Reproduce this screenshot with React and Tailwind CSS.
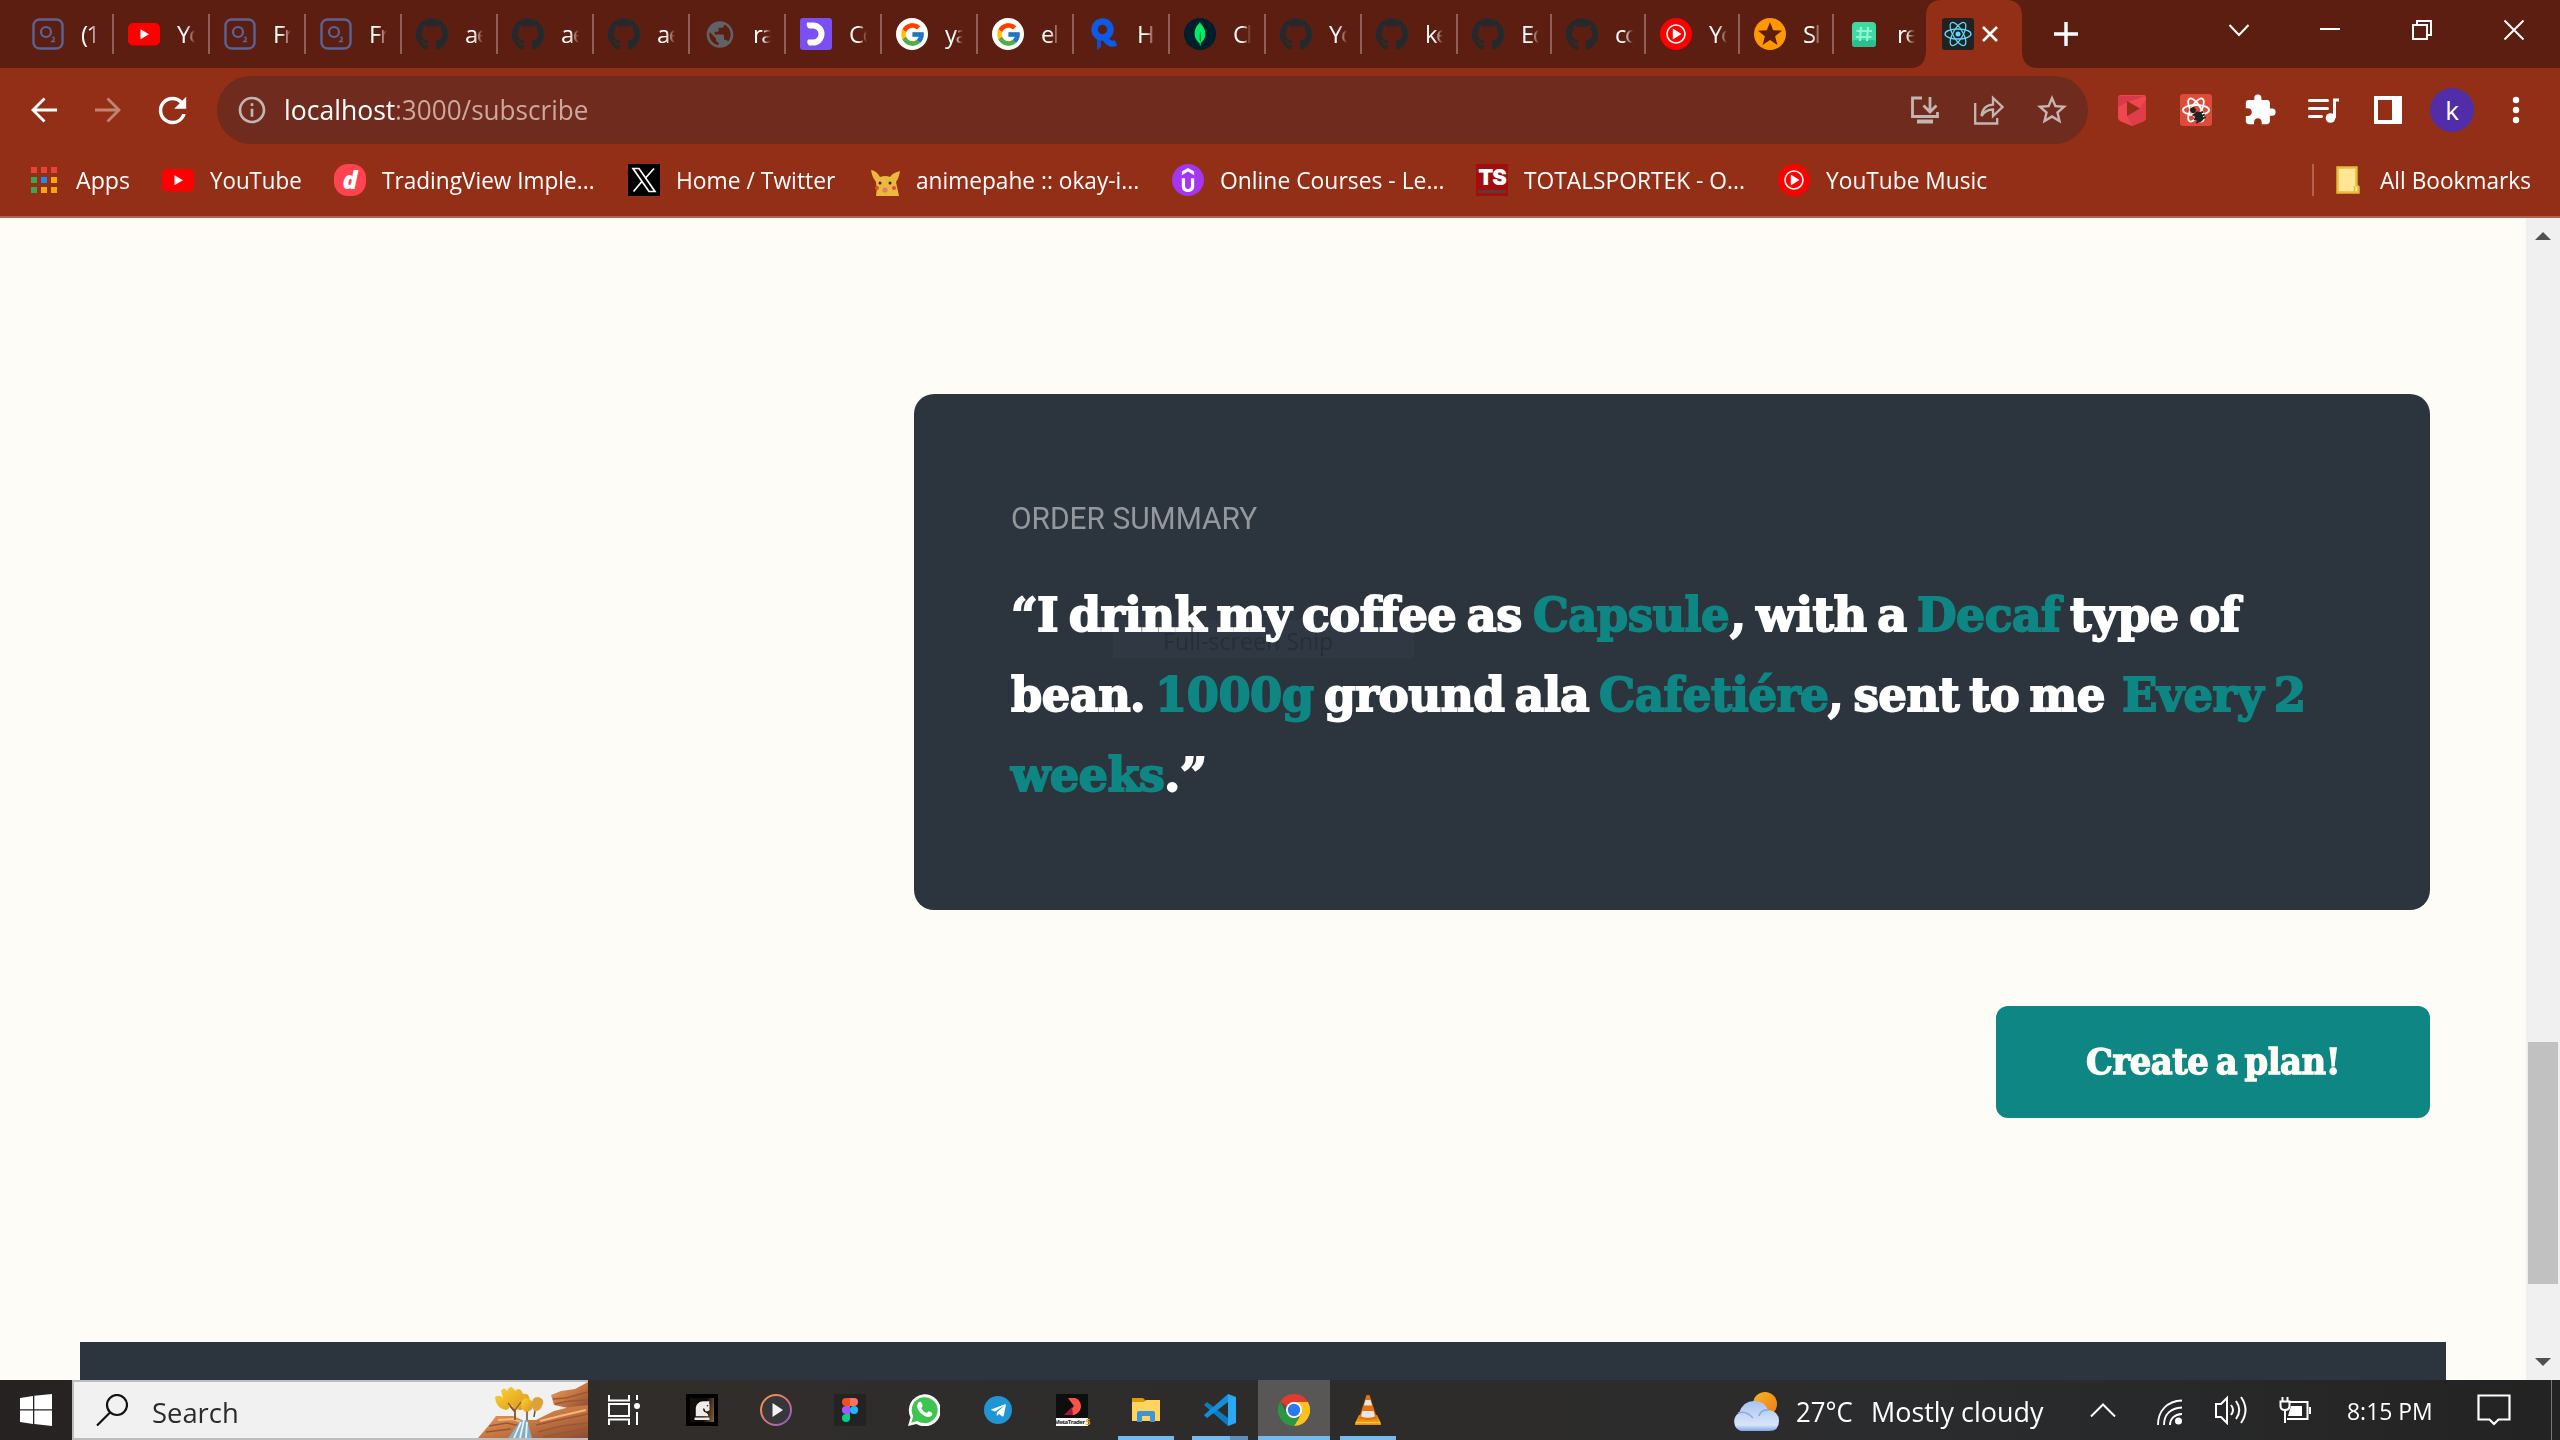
import { useLayoutEffect, useRef } from "react";
import { FaGithub, FaTelegramPlane, FaChessKnight } from "react-icons/fa";
import { FcGoogle } from "react-icons/fc";
import { SiMongodb, SiUdemy } from "react-icons/si";
import { MdRefresh, MdInfoOutline, MdStarOutline, MdExtension, MdPublic } from "react-icons/md";

/* Text set to an exact advance width, whatever face is available. */
function Fit({ w, children, className = "" }) {
  const inner = useRef(null);
  useLayoutEffect(() => {
    const natural = inner.current.offsetWidth;
    if (natural) inner.current.style.transform = `scaleX(${w / natural})`;
  }, [w]);
  return (
    <span className={`inline-block shrink-0 whitespace-pre ${className}`} style={{ width: w }}>
      <span ref={inner} className="inline-block origin-left">{children}</span>
    </span>
  );
}

/* ---------- Favicons ---------- */
const O2 = () => (
  <svg viewBox="0 0 32 32" className="size-8" fill="none" stroke="#5b6399">
    <rect x="1.5" y="1.5" width="29" height="29" rx="6" strokeWidth="2.4" />
    <circle cx="14" cy="14" r="5" strokeWidth="2.2" />
    <path d="M20 19.500c1.500-1 3 .3 2 1.600l-2.200 2.400h3.200" strokeWidth="1.400" />
  </svg>
);
const YouTube = () => (
  <svg viewBox="0 0 32 32" className="size-8">
    <rect y="5" width="32" height="22.500" rx="5" fill="#f00" />
    <path d="M12.500 11.200v10l8.500-5z" fill="#fff" />
  </svg>
);
const GitHub = () => <FaGithub className="size-[33px] text-[#24292e]" />;
const Globe = () => <MdPublic className="size-[33px] text-[#5f6368]" />;
const Dcoder = () => (
  <svg viewBox="0 0 32 32" className="size-8">
    <rect width="32" height="32" rx="3" fill="#7950f2" />
    <path d="M7 4.500h6a11.500 11.500 0 0 1 0 23h-4q-3-3-1-6h5a5.500 5.500 0 0 0 0-11h-4q-3-2-2-6z" fill="#fff" />
  </svg>
);
const Google = () => (
  <span className="flex size-8 items-center justify-center rounded-full bg-white">
    <FcGoogle className="size-[27px]" />
  </span>
);
const RMark = () => (
  <svg viewBox="0 0 32 32" className="size-8" fill="none">
    <path d="M9 18l4 2v9l-4 3z" fill="#0b4fd0" />
    <circle cx="14.500" cy="11.500" r="8" stroke="#0b5be6" strokeWidth="6.500" />
    <path d="M16 18c3 7 7 9 12 7" stroke="#0b5be6" strokeWidth="6" />
  </svg>
);
const Mongo = () => (
  <span className="flex size-8 items-center justify-center rounded-full bg-[#001e2b]">
    <SiMongodb className="size-[24px] text-[#00ed64]" />
  </span>
);
const YTMusic = () => (
  <svg viewBox="0 0 32 32" className="size-8">
    <circle cx="16" cy="16" r="16" fill="#f00" />
    <circle cx="16" cy="16" r="9" fill="none" stroke="#fff" strokeWidth="1.600" />
    <path d="M12.800 10.500v11l8.700-5.500z" fill="#fff" />
  </svg>
);
const StarIcon = () => (
  <svg viewBox="0 0 32 32" className="size-8">
    <circle cx="16" cy="16" r="16" fill="#ff9800" />
    <path d="M16 4l3.200 8.300 8.800.4-6.900 5.600 2.300 8.600L16 22l-7.400 4.900 2.300-8.600L4 12.700l8.800-.4z" fill="#5c1e10" />
  </svg>
);
const Hash = () => (
  <svg viewBox="0 0 32 32" className="size-8">
    <rect x="4" y="4" width="24" height="25" rx="4" fill="#3fd9a4" />
    <rect x="4" y="22" width="24" height="7" rx="3" fill="#2cbf8d" />
    <path d="M13 9l-1 14M20 9l-1 14M8.500 13h15.500M8 19h15.500" stroke="#8ff5cd" strokeWidth="2.200" />
  </svg>
);
const Orbits = ({ color, sw }) => (
  <g fill="none" stroke={color} strokeWidth={sw}>
    <ellipse cx="16" cy="16" rx="13" ry="5" />
    <ellipse cx="16" cy="16" rx="13" ry="5" transform="rotate(60 16 16)" />
    <ellipse cx="16" cy="16" rx="13" ry="5" transform="rotate(120 16 16)" />
  </g>
);
const ReactIcon = () => (
  <svg viewBox="0 0 32 32" className="size-8">
    <rect width="32" height="32" rx="3" fill="#222" />
    <Orbits color="#61dafb" sw="1.300" />
    <circle cx="16" cy="16" r="2.500" fill="#61dafb" />
  </svg>
);

const TABS = [
  [O2, "(1"], [YouTube, "Yo"], [O2, "Fr"], [O2, "Fr"], [GitHub, "ae"], [GitHub, "ae"], [GitHub, "ae"],
  [Globe, "ra"], [Dcoder, "Co"], [Google, "ya"], [Google, "el"], [RMark, "H"], [Mongo, "Cl"],
  [GitHub, "Yo"], [GitHub, "ke"], [GitHub, "Ed"], [GitHub, "co"], [YTMusic, "Yo"], [StarIcon, "Sl"], [Hash, "re"],
];

function TabStrip() {
  return (
    <div className="flex h-[68px] items-center bg-[#5c1e10] pl-[17px] text-white">
      {TABS.map(([Icon, label], i) => (
        <div key={i} className={`flex h-[68px] shrink-0 items-center pl-[15px] ${i > 14 ? "w-[94px]" : "w-24"}`}>
          <span className="flex size-8 shrink-0 items-center justify-center"><Icon /></span>
          <span className="ml-[17px] w-[18px] overflow-hidden whitespace-nowrap text-[24px] leading-[34px] tracking-[-1.5px] [mask-image:linear-gradient(to_right,black_50%,transparent)]">
            {label}
          </span>
          {i < TABS.length - 1 && <span className="ml-auto h-10 w-[2px] translate-x-px bg-[#8d6157]" />}
        </div>
      ))}
      <div className="relative -ml-px flex h-[68px] w-24 shrink-0 items-center">
        <svg viewBox="0 0 128 68" className="absolute top-0 -left-4 h-[68px] w-32" fill="#932f17">
          <path d="M0 68Q16 68 16 50V16Q16 0 32 0H96Q112 0 112 16V50Q112 68 128 68z" />
        </svg>
        <span className="relative ml-4"><ReactIcon /></span>
        <svg viewBox="0 0 16 16" className="relative ml-[8px] size-4" stroke="#fff" strokeWidth="2.600">
          <path d="M1 1l14 14M15 1L1 15" />
        </svg>
      </div>
      <svg viewBox="0 0 24 24" className="ml-8 size-6" stroke="#fff" strokeWidth="3.400"><path d="M12 0v24M0 12h24" /></svg>
      <div className="ml-auto flex h-[68px] items-center pr-9 pb-[9px]">
        <svg viewBox="0 0 20 20" className="size-5" fill="none" stroke="#fff" strokeWidth="2"><path d="M.5 5l9.500 10L19.500 5" /></svg>
        <svg viewBox="0 0 20 20" className="ml-[71px] size-5" stroke="#fff" strokeWidth="2"><path d="M0 9h20" /></svg>
        <svg viewBox="0 0 20 20" className="ml-[72px] size-5" fill="none" stroke="#fff" strokeWidth="2">
          <path d="M1 5h14v14H1zM5 5V1h14v14h-4" />
        </svg>
        <svg viewBox="0 0 20 20" className="ml-[72px] size-5" stroke="#fff" strokeWidth="2"><path d="M.5.5l19 19M19.500.5l-19 19" /></svg>
      </div>
    </div>
  );
}

function Toolbar() {
  return (
    <div className="flex h-[84px] items-center bg-[#932f17] text-white">
      <svg viewBox="0 0 26 26" className="ml-[31px] size-[26px]" fill="none" stroke="#fff" strokeWidth="2.800"><path d="M26 13H2M13.500 1.500L2 13l11.500 11.500" /></svg>
      <svg viewBox="0 0 26 26" className="ml-[38px] size-[26px]" fill="none" stroke="#c08475" strokeWidth="2.800"><path d="M0 13h24M12.500 1.500L24 13 12.500 24.500" /></svg>
      <MdRefresh className="ml-[31px] size-[41px]" />
      <div className="ml-[24px] flex h-[68px] w-[1871px] items-center rounded-full bg-[#6f2b1d] pl-[19px]">
        <MdInfoOutline className="size-8 text-[#c2b6b5]" />
        <span className="ml-4 flex pb-[2px] text-[28px] leading-[62px]">
          <Fit w={111}>localhost</Fit>
          <Fit w={193} className="text-[#cda79e]">:3000/subscribe</Fit>
        </span>
        <span className="ml-auto flex items-center pr-[18px] text-[#c4b5b1]">
          <svg viewBox="0 0 30 30" className="size-[30px]" fill="none" stroke="currentColor" strokeWidth="2.800">
            <path d="M12 3H2.500v18.500h25V17M20 2v14M13.500 10.500l6.500 6.500 6.500-6.500" /><path d="M7 26.500h16" strokeWidth="4" />
          </svg>
          <svg viewBox="0 0 30 30" className="ml-[34px] size-[30px]" fill="none" stroke="currentColor" strokeWidth="2.300">
            <path d="M1.200 8v20.500h22V23" /><path d="M7.500 21c1-8 5.500-11 11.500-11.300V3l9.500 9-9.500 9v-6.500c-5 0-8.500 2-11.500 6.500z" />
          </svg>
          <MdStarOutline className="ml-[30px] size-9" />
        </span>
      </div>
      <svg viewBox="0 0 30 32" className="ml-[29px] h-8 w-[30px]">
        <path d="M1 4q0-3 3-3h23q2 0 2 3v20q0 2-3 3.500L15 32 4 27.500q-3-1.500-3-3.500z" fill="#f04650" />
        <path d="M29 5v19q0 2-3 3.500L15 32l-5-10 13-8z" fill="#e03d4b" />
        <path d="M1 2h27L11 8 1 13z" fill="#d93a49" /><path d="M10 7v15l13-7.500z" fill="#932f17" />
      </svg>
      <svg viewBox="0 0 32 32" className="ml-[33px] size-8">
        <rect width="32" height="32" rx="3" fill="#dd4b39" /><Orbits color="#fff" sw="1.800" />
        <g transform="rotate(-25 19 21)" fill="#222" stroke="#222">
          <circle cx="15.500" cy="14" r="2.400" /><ellipse cx="18" cy="22.500" rx="3.600" ry="5" />
          <path d="M13 18.500l11 1.500M12.500 23h12M13 27l11-1.500" strokeWidth="1.800" />
        </g>
      </svg>
      <MdExtension className="ml-[31px] size-[34px]" />
      <svg viewBox="0 0 32 26" className="ml-[31px] h-[26px] w-8" fill="none" stroke="#fff" strokeWidth="3" strokeLinecap="round">
        <path d="M1.500 3.500h18M1.500 11.500h18M1.500 19.500h12" /><path d="M26.500 21V3H31" strokeLinecap="butt" />
        <circle cx="22.500" cy="21" r="4.800" fill="#fff" stroke="none" />
      </svg>
      <span className="ml-[34px] h-7 w-7 border-4 border-r-[10px] border-white" />
      <span className="ml-7 flex size-11 items-center justify-center rounded-full bg-[#512da8] text-[26px] leading-none">k</span>
      <svg viewBox="0 0 8 28" className="ml-[38px] h-7 w-2" fill="#fff">
        <circle cx="4" cy="4" r="3.200" /><circle cx="4" cy="14" r="3.200" /><circle cx="4" cy="24" r="3.200" />
      </svg>
    </div>
  );
}

const APP_COLORS = [
  "bg-[#ea4335]", "bg-[#ea4335]", "bg-[#ea4335]", "bg-[#34a853]", "bg-[#1e88f5]",
  "bg-[#f6a609]", "bg-[#34a853]", "bg-[#f6a609]", "bg-[#f6a609]",
];

function Bookmarks() {
  return (
    <div className="flex h-[66px] items-center border-b-2 border-[#b0634d] bg-[#932f17] pb-[9px] text-[24px] leading-[35px] text-white">
      <span className="ml-[31px] grid w-[26px] grid-cols-3 gap-x-1 gap-y-1">
        {APP_COLORS.map((c, i) => <span key={i} className={`size-[6px] ${c}`} />)}
      </span>
      <Fit w={54} className="ml-[19px]">Apps</Fit>
      <span className="ml-8"><YouTube /></span>
      <Fit w={92} className="ml-4">YouTube</Fit>
      <span className="ml-[32px] flex size-8 items-center justify-center rounded-[14px] bg-[#ff4350] text-[25px] font-extrabold italic">d</span>
      <Fit w={213} className="ml-4">TradingView Imple...</Fit>
      <svg viewBox="0 0 32 32" className="ml-[33px] size-8">
        <rect width="32" height="32" fill="#000" />
        <path d="M5 4.500h6l16 23h-6zM26 4.500L17.500 14M13.500 18L5.500 27.500" fill="none" stroke="#fff" strokeWidth="1.700" />
      </svg>
      <Fit w={159} className="ml-4">Home / Twitter</Fit>
      <svg viewBox="0 0 32 32" className="ml-[34px] size-8">
        <path d="M2 6q6 1 9 7 6-2 10 0 2-4 10-6-1 7-4 11l3 14H7l1-8q-1-3-1-6-4-5-5-12z" fill="#ecb93f" />
        <circle cx="11" cy="19" r="1.500" fill="#33251a" /><circle cx="21" cy="19" r="1.500" fill="#33251a" />
        <circle cx="8" cy="24" r="2" fill="#dd4e33" /><circle cx="25" cy="24" r="2" fill="#dd4e33" />
        <circle cx="16" cy="26" r="2.600" fill="#ec7a61" />
      </svg>
      <Fit w={223} className="ml-[15px]">animepahe :: okay-i...</Fit>
      <span className="ml-[33px] flex size-8 items-center justify-center rounded-full bg-[#a435f0]"><SiUdemy className="size-6" /></span>
      <Fit w={224} className="ml-4">Online Courses - Le...</Fit>
      <span className="ml-8 flex size-8 flex-col items-center bg-[#a40d0d] pt-[2px]">
        <span className="font-['Inter'] text-[22px] leading-[23px] font-black tracking-[-1.2px]">TS</span>
        <span className="mt-px h-[3px] w-7 bg-[#5d3a3a]" />
      </span>
      <Fit w={221} className="ml-4">TOTALSPORTEK - O...</Fit>
      <span className="ml-[33px]"><YTMusic /></span>
      <Fit w={161} className="ml-4">YouTube Music</Fit>
      <span className="ml-auto h-8 w-[2px] bg-[#b0634d]" />
      <svg viewBox="0 0 24 28" className="ml-[22px] h-7 w-6">
        <path d="M1.500 1.500h19v18l2 1.500v5.500h-21z" fill="#ffe694" stroke="#e5bd3c" strokeWidth="2.400" /><path d="M18.500 26v-6" stroke="#e5bd3c" strokeWidth="1.600" />
      </svg>
      <Fit w={151} className="mr-[29px] ml-5">All Bookmarks</Fit>
    </div>
  );
}

const SERIF = "font-['DejaVu_Serif',serif] font-bold";

function Page() {
  return (
    <div className="flex h-[1162px] bg-[#fefcf7]">
      <main className="flex flex-1 flex-col overflow-hidden">
        <section className="relative mt-[176px] ml-[914px] h-[516px] w-[1516px] rounded-[20px] bg-[#2c343e] pt-[101px] pl-[97px]">
          <div className="absolute top-[226px] left-[199px] flex h-[38px] w-[301px] items-center bg-[#2f3843] pt-[3px] pl-[50px] text-[24px] text-[#262f39]">
            <Fit w={170}>Full-screen Snip</Fit>
          </div>
          <p className="relative h-12 font-['Roboto'] text-[30.5px] leading-[48px] text-[#95989b]"><Fit w={246}>ORDER SUMMARY</Fit></p>
          <div className={`relative mt-8 text-[46px] leading-[80px] tracking-[-0.5px] text-white [word-spacing:-5px] [-webkit-text-stroke:1.8px_currentColor] ${SERIF}`}>
            <p className="flex h-20">
              <Fit w={511}>“I drink my coffee as</Fit>
              <Fit w={196} className="ml-[11px] text-[#0e8784]">Capsule</Fit>
              <Fit w={177} className="ml-px">, with a</Fit>
              <Fit w={143} className="ml-[10px] text-[#0e8784]">Decaf</Fit>
              <Fit w={169} className="ml-[10px]">type of</Fit>
            </p>
            <p className="flex h-20">
              <Fit w={134}>bean.</Fit>
              <Fit w={159} className="ml-[10px] text-[#0e8784]">1000g</Fit>
              <Fit w={265} className="ml-[10px]">ground ala</Fit>
              <Fit w={229} className="ml-[10px] text-[#0e8784]">Cafetiére</Fit>
              <Fit w={277}>, sent to me</Fit>
              <Fit w={184} className="ml-[17px] text-[#0e8784]">Every 2</Fit>
            </p>
            <p className="flex h-20">
              <Fit w={153} className="text-[#0e8784]">weeks</Fit>
              <Fit w={42}>.”</Fit>
            </p>
          </div>
        </section>
        <button className={`mt-24 ml-[1996px] flex h-28 w-[434px] items-center justify-center rounded-xl bg-[#0e8784] pt-px text-[35px] tracking-[-0.5px] text-[#fefcf7] [word-spacing:-4px] [-webkit-text-stroke:1.3px_currentColor] ${SERIF}`}>
          <Fit w={254}>Create a plan!</Fit>
        </button>
        <footer className="mt-auto mr-20 ml-20 h-[38px] bg-[#2c343e]" />
      </main>
      <div className="flex w-[34px] flex-col items-center bg-[#f0f0f0] py-[14px]">
        <svg viewBox="0 0 16 8" className="h-2 w-4" fill="#505050"><path d="M0 8l8-8 8 8z" /></svg>
        <span className="mt-[802px] h-[242px] w-[30px] bg-[#c1c1c1]" />
        <svg viewBox="0 0 16 8" className="mt-auto h-2 w-4" fill="#505050"><path d="M0 0l8 8 8-8z" /></svg>
      </div>
    </div>
  );
}

/* ---------- Taskbar ---------- */
const SearchArt = () => (
  <svg viewBox="0 0 110 56" className="h-14 w-[110px]">
    <defs>
      <linearGradient id="rock" x1="0" y1="0" x2="1" y2="1">
        <stop offset="0" stopColor="#eda566" /><stop offset=".5" stopColor="#c87843" /><stop offset="1" stopColor="#8d4c31" />
      </linearGradient>
      <linearGradient id="leaf" x1="0" y1="0" x2="1" y2="1">
        <stop offset="0" stopColor="#ffd42e" /><stop offset="1" stopColor="#d69121" />
      </linearGradient>
    </defs>
    <path d="M110 0L97 7l-14 2-10 4 3 10 14 3 20-1z" fill="url(#rock)" />
    <path d="M75 17l13-1 22-6M77 22l15-3 18-1" stroke="#9b5636" strokeWidth="1.400" fill="none" />
    <path d="M0 56l12-14 6-8 17 0 9 4h14l18-9 16-4 18-2v33z" fill="url(#rock)" />
    <path d="M11 44l18-3 13 3M8 50l25-3M58 43l18-4 34-7M60 50l24-6 26-3M65 55l45-9" stroke="#9b5636" strokeWidth="1.500" fill="none" />
    <path d="M20 38l15-1 8 3M62 39l20-5 26-6" stroke="#f4b67b" strokeWidth="2" fill="none" />
    <path d="M37 38V20M37 30l-9-11M37 28l10-12M49 38V24M56 35l2-12" stroke="#714725" strokeWidth="1.500" fill="none" />
    <path d="M17 15q4-3 8 1l-2-7q3-5 6 0 4-8 8 0 5-5 8 3 5-1 6 3 2 5-3 10-5 5-9 2l-2 3-3-7-5 5q-11-1-12-13z" fill="url(#leaf)" />
    <path d="M43 25q0-8 5-9 7 2 7 6 0 8-8 8z" fill="url(#leaf)" /><path d="M54 24q-1-9 6-9 8 2 4 9-2 6-8 5z" fill="#dba13b" />
    <path d="M37 27v9M30 21l7 8M43 20l-6 8" stroke="#8a5a24" strokeWidth="1.200" fill="none" />
    <path d="M43 38h6l5 18H30l8-11z" fill="#86aec0" />
    <path d="M43 40l-7 16M46 38l-4 18M49 40l-1 16" stroke="#e4f5fb" strokeWidth="1.800" />
  </svg>
);

const Chess = () => (
  <span className="flex size-8 items-center justify-center bg-black">
    <span className="flex size-6 flex-col items-center justify-center bg-[linear-gradient(100deg,#17100a,#0d0906_60%,#8d6535)]">
      <FaChessKnight className="size-[20px] -scale-x-100 text-[#f0ede8]" />
    </span>
  </span>
);
const Media = () => (
  <svg viewBox="0 0 32 32" className="size-8">
    <defs><linearGradient id="ring" x1="0" y1="0" x2="1" y2="1"><stop offset="0" stopColor="#ff9a3c" /><stop offset=".5" stopColor="#d9737a" /><stop offset="1" stopColor="#7b5cd6" /></linearGradient></defs>
    <circle cx="16" cy="16" r="15" fill="#37373a" stroke="url(#ring)" strokeWidth="2" /><path d="M12.500 9v14L23 16z" fill="#f2f2f2" />
  </svg>
);
const Figma = () => (
  <svg viewBox="0 0 32 32" className="size-8">
    <rect width="32" height="32" fill="#232323" />
    <path d="M16 4h-4a4 4 0 0 0 0 8h4z" fill="#f24e1e" /><path d="M16 4h4a4 4 0 0 1 0 8h-4z" fill="#ff7262" />
    <path d="M16 12h-4a4 4 0 0 0 0 8h4z" fill="#a259ff" /><circle cx="20" cy="16" r="4" fill="#1abcfe" />
    <path d="M16 20h-4a4 4 0 1 0 4 4z" fill="#0acf83" />
  </svg>
);
const WhatsApp = () => (
  <svg viewBox="0 0 32 32" className="size-8">
    <path d="M0 32l2.500-8.500A16 16 0 1 1 8.500 30z" fill="#fff" />
    <path d="M3.200 28.800l2-6.500A13 13 0 1 1 9.500 27z" fill="#3fc351" />
    <path d="M10.500 8.500c1-1 2.500-1 3 .3l1.200 3c.2.700-1.500 2-1.200 2.700 1.200 2.300 2.700 3.600 5 4.500.7.200 1.800-2 2.500-1.700l3 1.500c1.200 1-.5 4.200-3.500 4.200-5 0-11-6-11.300-10.500 0-1.500.5-3.200 1.300-4z" fill="#fff" />
  </svg>
);
const Telegram = () => (
  <span className="flex size-7 items-center justify-center rounded-full bg-[#1f95d6]"><FaTelegramPlane className="size-[17px] text-white" /></span>
);
const MetaTrader = () => (
  <span className="flex size-8 flex-col bg-[#0e0e0e]">
    <svg viewBox="0 0 32 24" className="h-6 w-8">
      <path d="M12 4h7q6 2 6 9-1 6-7 8l-9 0 9-9z" fill="#ff5348" /><path d="M8 21l8-8 1 8z" fill="#a3163c" />
    </svg>
    <span className="flex h-2 items-center justify-center bg-white text-[6px] leading-none font-bold tracking-[-0.5px] text-[#222]">MetaTrader<span className="ml-px text-[8px] text-[#e5a900]">5</span></span>
  </span>
);
const Explorer = () => (
  <svg viewBox="0 0 28 26" className="h-[26px] w-7">
    <path d="M0 1h11l2 2v4H0z" fill="#dd9a08" /><path d="M0 5h12l2-2h14v21H0z" fill="#ffd45e" />
    <path d="M5 25V16q0-2 2-2h14q2 0 2 2v9h-5v-6h-8v6z" fill="#3d94d6" />
  </svg>
);
const VSCode = () => (
  <svg viewBox="0 0 32 32" className="size-8">
    <path d="M0 11l3-3 21 16v8z" fill="#0a7cc4" /><path d="M0 21l3 3L24 8V0z" fill="#1390db" />
    <path d="M24 0l8 3v26l-8 3z" fill="#29a9f2" />
  </svg>
);
const Chrome = () => (
  <svg viewBox="0 0 32 32" className="size-8">
    <path d="M16 16L2.140 8A16 16 0 0 1 29.860 8z" fill="#e33b2e" /><path d="M16 8h13.860A16 16 0 0 1 16 32l7-12z" fill="#fcc31e" />
    <path d="M2.140 8L9 20l7 4h5l-5 8A16 16 0 0 1 2.140 8z" fill="#2a9747" />
    <circle cx="16" cy="16" r="8" fill="#fff" /><circle cx="16" cy="16" r="6.200" fill="#2a79ee" />
  </svg>
);
const Vlc = () => (
  <svg viewBox="0 0 26 30" className="h-[30px] w-[26px]">
    <path d="M4 20h18l4 8v2H0v-2z" fill="#f58a0b" /><path d="M1 27.500h24" stroke="#ffd23c" strokeWidth="1.500" />
    <path d="M11.500 0h3L22 23q-9 4-18 0z" fill="#e8700a" />
    <path d="M10.500 5h5l1.500 5.500H9zM7.500 16h11l1.500 5.500q-7 2.500-14 0z" fill="#e4e6ea" />
  </svg>
);

const APPS = [
  { Icon: Chess }, { Icon: Media }, { Icon: Figma }, { Icon: WhatsApp }, { Icon: Telegram }, { Icon: MetaTrader },
  { Icon: Explorer, bar: "w-14" }, { Icon: VSCode, bar: "w-14", split: true }, { Icon: Chrome, bar: "w-[72px]", active: true }, { Icon: Vlc, bar: "w-14" },
];

function Taskbar() {
  return (
    <div className="flex h-[60px] items-center bg-[linear-gradient(to_right,#272222,#302d2b_25%,#2d2c2b_60%,#2b2c2e_75%,#232323)] text-white">
      <span className="flex w-[72px] justify-center">
        <svg viewBox="0 0 32 32" className="size-8" fill="#fff"><path d="M0 4l13-2v13.300H0zM14.300 1.800L32 0v15.300H14.300zM0 16.600h13V30L0 28zM14.300 16.600H32V32l-17.700-2z" /></svg>
      </span>
      <div className="flex h-[60px] w-[516px] items-center overflow-hidden border-2 border-r-0 border-[#bdbdbd] bg-[#f1f1f1] pl-[22px] text-[#2b2b2b]">
        <svg viewBox="0 0 32 32" className="size-8" fill="none" stroke="#111" strokeWidth="2.200"><circle cx="21" cy="11" r="10" /><path d="M14 18.500L1 31.500" /></svg>
        <Fit w={87} className="ml-6 pt-[3px] text-[28px]">Search</Fit>
        <span className="ml-auto"><SearchArt /></span>
      </div>
      <span className="flex w-[77px] pl-5">
        <svg viewBox="0 0 32 30" className="h-[30px] w-8" fill="none" stroke="#fff" strokeWidth="2">
          <path d="M1 0v5.500h20V0M1 9h20v12H1zM1 30v-5.500h20V30M29 0v5M29 17v13" /><circle cx="29" cy="11" r="3" fill="#fff" stroke="none" />
        </svg>
      </span>
      {APPS.map(({ Icon, bar, active, split }, i) => (
        <span key={i} className="flex h-[60px] w-[74px] shrink-0 justify-center">
          <span className={`relative flex h-[60px] w-[72px] items-center justify-center ${active ? "bg-[#585756]" : ""}`}>
            <Icon />
            {bar && (
              <span className={`absolute bottom-0 flex h-1 justify-end bg-[#76b9ed] ${bar}`}>
                {split && <span className="h-1 w-[18px] bg-[#5d8fba]" />}
              </span>
            )}
          </span>
        </span>
      ))}
      <svg viewBox="0 0 48 40" className="ml-auto h-10 w-12 translate-y-[2px]">
        <defs>
          <linearGradient id="cloud" x1="0" y1="0" x2="0" y2="1"><stop offset="0" stopColor="#a9c3f0" /><stop offset=".8" stopColor="#d8e5fa" /><stop offset="1" stopColor="#7fa5ea" /></linearGradient>
          <linearGradient id="sun" x1="0" y1="0" x2="1" y2="1"><stop offset="0" stopColor="#f3b726" /><stop offset="1" stopColor="#f07a12" /></linearGradient>
        </defs>
        <circle cx="34" cy="12" r="12" fill="url(#sun)" />
        <path d="M10 39a10 10 0 0 1-2-18Q12 9 23 9t14 9q11 1 11 11t-10 10z" fill="url(#cloud)" />
        <path d="M7 21q8-3 15 5M28 24q2-7 10-6" stroke="#86a9e6" strokeWidth="1.500" fill="none" />
      </svg>
      <span className="ml-[17px] flex pt-[2px] text-[28px] leading-[54px]">
        <Fit w={57}>27°C</Fit>
        <Fit w={172} className="ml-[18px]">Mostly cloudy</Fit>
      </span>
      <svg viewBox="0 0 26 14" className="ml-[47px] h-[14px] w-[26px]" fill="none" stroke="#fff" strokeWidth="2"><path d="M1 13.500L13 1.500l12 12" /></svg>
      <svg viewBox="0 0 26 26" className="ml-[41px] size-[26px] translate-y-[2px]" fill="none" stroke="#fff" strokeWidth="1.800">
        <path d="M1 26C1 12 10 2 25 1.500M7 26c0-10 6-17 18-17.500M13 26c0-6 4-10.500 12-11" /><circle cx="21.500" cy="22" r="3.500" fill="#fff" stroke="none" />
      </svg>
      <svg viewBox="0 0 34 30" className="ml-8 h-[30px] w-[34px]" fill="none" stroke="#fff" strokeWidth="2">
        <path d="M1 9h5l6-6v25l-6-6H1zM16 10q4 5 0 10M21 6q6.500 9 0 18M26 2q9 13 0 26" />
      </svg>
      <svg viewBox="0 0 32 26" className="ml-[30px] h-[26px] w-8" fill="none" stroke="#fff" strokeWidth="2">
        <path d="M11 5h17.500v17H8M31 10v7M3.500 0v4M8.500 0v4M1.500 4.500h9V9q0 4-4.500 4T1.500 9zM6 13v13" /><path d="M12 9h11v10H9z" fill="#fff" stroke="none" />
      </svg>
      <Fit w={86} className="ml-[36px] pt-[2px] text-[24px]">8:15 PM</Fit>
      <svg viewBox="0 0 34 32" className="ml-[44px] h-8 w-[34px]" fill="none" stroke="#fff" strokeWidth="2.200"><path d="M1.500 1.500h31v24H21.500L17 30l-4.500-4.500h-11z" /></svg>
      <span className="mr-[8px] ml-[40px] h-[60px] w-px bg-[#777]" />
    </div>
  );
}

export default function App() {
  return (
    <div className="flex h-[1440px] w-[2560px] flex-col overflow-hidden font-['Open_Sans','Noto_Sans',sans-serif]">
      <TabStrip />
      <Toolbar />
      <Bookmarks />
      <Page />
      <Taskbar />
    </div>
  );
}
